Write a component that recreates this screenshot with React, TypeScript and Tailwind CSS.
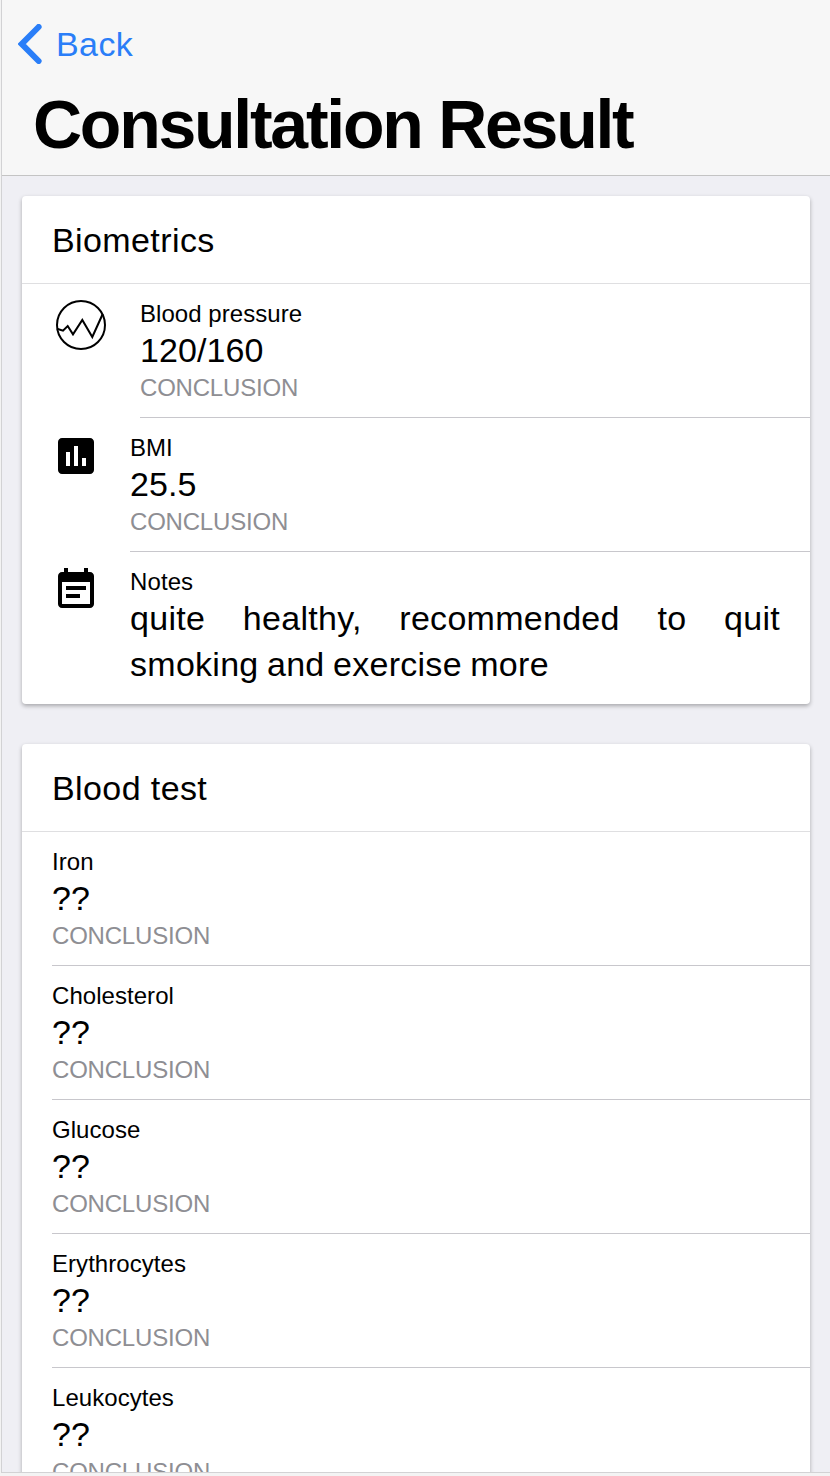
import type { ReactNode } from 'react';

type Entry = { label: string; value: string };

const bloodTests: Entry[] = [
  { label: 'Iron', value: '??' },
  { label: 'Cholesterol', value: '??' },
  { label: 'Glucose', value: '??' },
  { label: 'Erythrocytes', value: '??' },
  { label: 'Leukocytes', value: '??' },
];

function PulseIcon() {
  return (
    <svg className="-mt-0.5 h-[58px] w-[58px]" viewBox="0 0 58 58" fill="none" stroke="#000" strokeWidth="2">
      <circle cx="29" cy="29" r="24" />
      <path d="M5 32.7l6 2 4.7-4.7 5.3 8.3L30.3 24l10 17L50.7 18" />
    </svg>
  );
}

function ChartIcon() {
  return (
    <svg className="h-12 w-12" viewBox="0 0 24 24" fill="#000">
      <path d="M19 3H5c-1.1 0-2 .9-2 2v14c0 1.1.9 2 2 2h14c1.1 0 2-.9 2-2V5c0-1.1-.9-2-2-2zM9 17H7v-7h2v7zm4 0h-2V7h2v10zm4 0h-2v-4h2v4z" />
    </svg>
  );
}

function NoteIcon() {
  return (
    <svg className="h-12 w-12" viewBox="0 0 24 24" fill="#000">
      <path d="M17 10H7v2h10v-2zm2-7h-1V1h-2v2H8V1H6v2H5c-1.11 0-1.99.9-1.99 2L3 19c0 1.1.89 2 2 2h14c1.1 0 2-.9 2-2V5c0-1.1-.9-2-2-2zm0 16H5V8h14v11zm-5-5H7v2h7v-2z" />
    </svg>
  );
}

function Card({ title, children }: { title: string; children: ReactNode }) {
  return (
    <section className="shrink-0 rounded-[4px] bg-white shadow-[0_2px_4px_rgba(0,0,0,0.3)]">
      <h2 className="flex h-[88px] items-center border-b border-[#dfdfe1] px-[30px] pt-0.5 text-[34px] tracking-[0.4px]">
        {title}
      </h2>
      <ul>{children}</ul>
    </section>
  );
}

function Row({ label, value, icon }: Entry & { icon?: ReactNode }) {
  return (
    <li className="flex h-[134px] pl-[30px]">
      {icon && <div className="mr-[30px] shrink-0 pt-[14px]">{icon}</div>}
      <div className="grow border-b border-[#c8c7cc] pt-[15px]">
        <div className="text-[24px] leading-[29px] tracking-[0.05px]">{label}</div>
        <div className="text-[34px] leading-[44px] tracking-[0.1px]">{value}</div>
        <div className="pt-px text-[24px] leading-[29px] tracking-[-0.2px] text-[#8e8e93]">CONCLUSION</div>
      </div>
    </li>
  );
}

export default function App() {
  return (
    <div className="h-[1476px] w-[830px] overflow-hidden bg-[#f3f3f3] pl-px font-['Liberation_Sans',Arial,sans-serif] text-black">
      <div className="flex h-[1473px] flex-col overflow-hidden border-b border-l border-[#d2d2d4] bg-[#efeff4]">
        <header className="h-[176px] shrink-0 border-b border-[#c4c4c4] bg-[#f7f7f7]">
          <a className="flex h-[88px] items-center pl-4 text-[34px] tracking-[0.4px] text-[#2a7ef8]">
            <svg className="h-[40px] w-[24px]" viewBox="0 0 24 40" fill="none" stroke="currentColor" strokeWidth="6" strokeLinecap="round" strokeLinejoin="miter">
              <path d="M20.6 3L3.8 20l16.8 17" />
            </svg>
            <span className="ml-[14px]">Back</span>
          </a>
          <h1 className="pl-[31px] text-[68px] font-bold leading-[73px] tracking-[-2.25px]">Consultation Result</h1>
        </header>
        <main className="flex flex-col gap-10 px-5 pt-5">
          <Card title="Biometrics">
            <Row label="Blood pressure" value="120/160" icon={<PulseIcon />} />
            <Row label="BMI" value="25.5" icon={<ChartIcon />} />
            <li className="flex h-[152px] pl-[30px]">
              <div className="mr-[30px] shrink-0 pt-[14px]"><NoteIcon /></div>
              <div className="grow pr-[30px] pt-[15px]">
                <div className="text-[24px] leading-[29px] tracking-[0.1px]">Notes</div>
                <p className="-mt-px text-justify text-[34px] leading-[46px] tracking-[0.28px] [word-spacing:-1.3px]">
                  quite healthy, recommended to quit smoking and exercise more
                </p>
              </div>
            </li>
          </Card>
          <Card title="Blood test">
            {bloodTests.map((test) => (
              <Row key={test.label} label={test.label} value={test.value} />
            ))}
          </Card>
        </main>
      </div>
    </div>
  );
}
